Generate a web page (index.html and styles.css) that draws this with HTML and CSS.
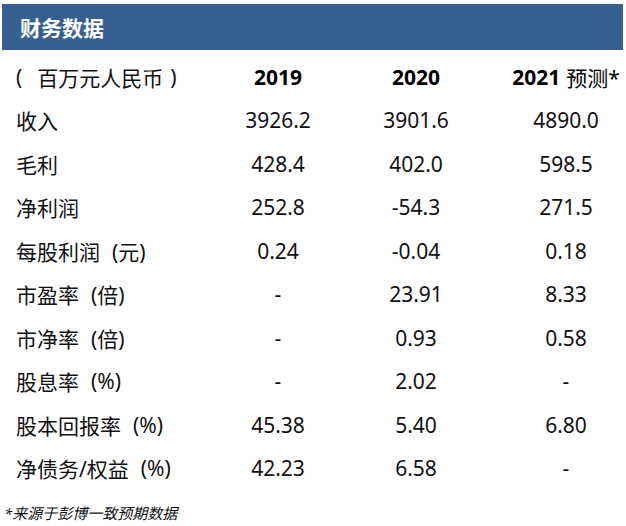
FILE: index.html
```html
<!DOCTYPE html>
<html lang="zh-CN">
<head>
<meta charset="utf-8">
<title>财务数据</title>
<link rel="stylesheet" href="styles.css">
</head>
<body>
<div class="page">
  <div class="title-wrap">
    <div class="title">财务数据</div>
  </div>
  <div class="table">
    <div class="cell label"><span class="pl">(</span>百万元人民币<span class="pr">)</span></div>
    <div class="cell num head">2019</div>
    <div class="cell num head">2020</div>
    <div class="cell num head last">2021 <span class="thin">预测*</span></div>

    <div class="cell label">收入</div>
    <div class="cell num">3926.2</div>
    <div class="cell num">3901.6</div>
    <div class="cell num last">4890.0</div>

    <div class="cell label">毛利</div>
    <div class="cell num">428.4</div>
    <div class="cell num">402.0</div>
    <div class="cell num last">598.5</div>

    <div class="cell label">净利润</div>
    <div class="cell num">252.8</div>
    <div class="cell num">-54.3</div>
    <div class="cell num last">271.5</div>

    <div class="cell label">每股利润<span class="unit">(元)</span></div>
    <div class="cell num">0.24</div>
    <div class="cell num">-0.04</div>
    <div class="cell num last">0.18</div>

    <div class="cell label">市盈率<span class="unit">(倍)</span></div>
    <div class="cell num">-</div>
    <div class="cell num">23.91</div>
    <div class="cell num last">8.33</div>

    <div class="cell label">市净率<span class="unit">(倍)</span></div>
    <div class="cell num">-</div>
    <div class="cell num">0.93</div>
    <div class="cell num last">0.58</div>

    <div class="cell label">股息率<span class="unit">(%)</span></div>
    <div class="cell num">-</div>
    <div class="cell num">2.02</div>
    <div class="cell num last">-</div>

    <div class="cell label">股本回报率<span class="unit">(%)</span></div>
    <div class="cell num">45.38</div>
    <div class="cell num">5.40</div>
    <div class="cell num last">6.80</div>

    <div class="cell label">净债务/权益<span class="unit">(%)</span></div>
    <div class="cell num">42.23</div>
    <div class="cell num">6.58</div>
    <div class="cell num last">-</div>
  </div>
  <div class="note">*来源于彭博一致预期数据</div>
</div>
</body>
</html>
```

FILE: styles.css
```css
html, body {
  margin: 0;
  padding: 0;
  background: #ffffff;
}

body {
  font-family: "Noto Sans", "Noto Sans CJK SC", sans-serif;
  color: #111111;
  width: 626px;
  height: 526px;
  overflow: hidden;
}

.page {
  display: flex;
  flex-direction: column;
}

.title-wrap {
  padding: 4px 3px 0 2px;
}

.title {
  height: 46px;
  background: #366092;
  color: #ffffff;
  font-weight: 700;
  font-size: 21px;
  padding-left: 18px;
  display: flex;
  align-items: center;
}

.table {
  margin-top: 5px;
  display: grid;
  grid-template-columns: 208px 140px 136px 142px;
  grid-auto-rows: 43.5px;
  font-size: 21px;
}

.cell {
  display: flex;
  align-items: center;
  white-space: nowrap;
}

.label {
  padding-left: 16px;
}

.pl {
  margin-right: 15px;
}

.pr {
  margin-left: 7px;
}

.unit {
  margin-left: 12px;
}

.num {
  justify-content: center;
}

.num.last {
  padding-left: 22px;
}

.head {
  font-weight: 700;
  color: #000000;
}

.thin {
  font-weight: 400;
  margin-left: 6px;
}

.note {
  margin-top: 13px;
  padding-left: 4px;
  font-size: 15px;
  line-height: 20px;
  font-style: italic;
}
```
